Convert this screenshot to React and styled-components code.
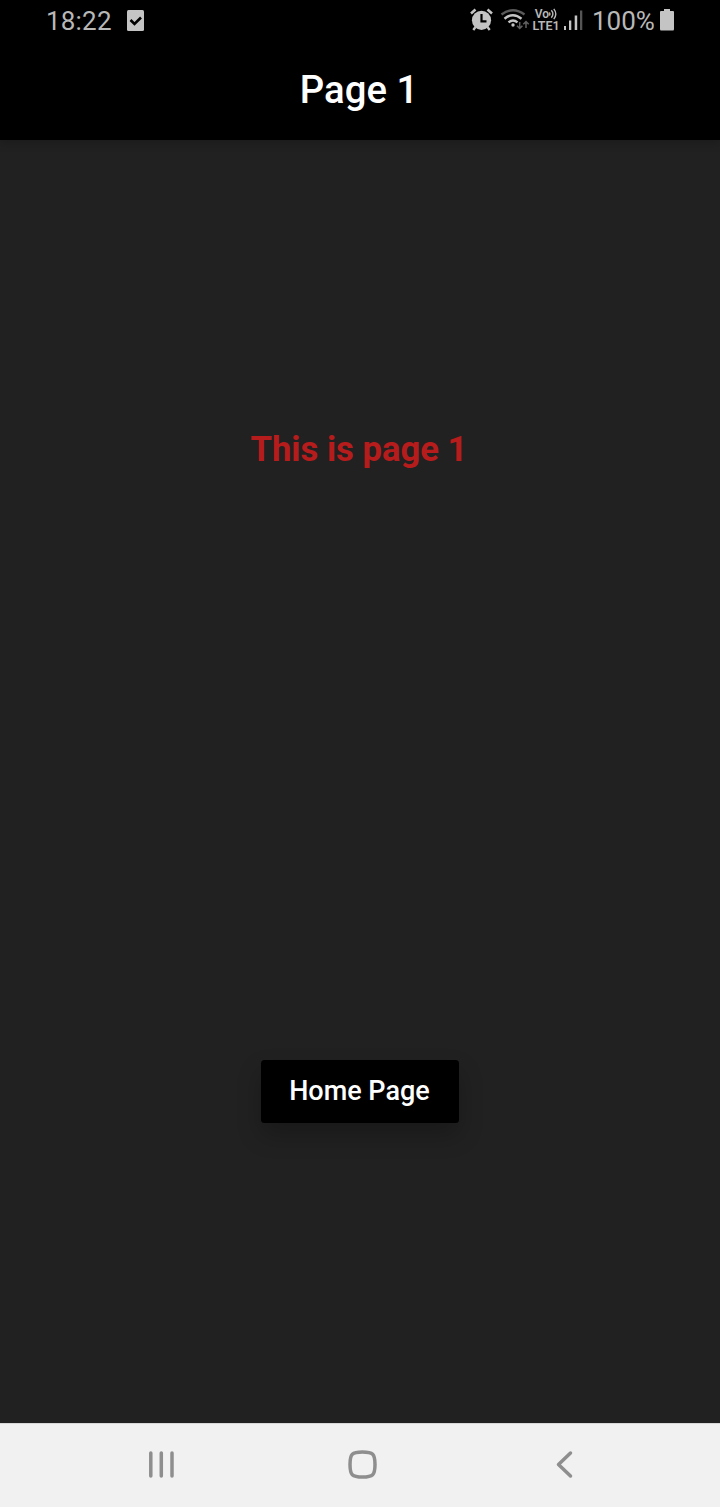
import React from 'react';
import styled, { createGlobalStyle } from 'styled-components';

const GlobalStyle = createGlobalStyle`
  * { box-sizing: border-box; }
  body { margin: 0; background: #212121; }
`;

const Screen = styled.div`
  width: 720px;
  height: 1507px;
  display: flex;
  flex-direction: column;
  background: #212121;
  font-family: Roboto, sans-serif;
  overflow: hidden;
`;

const Header = styled.header`
  height: 140px;
  flex: none;
  background: #000;
  box-shadow: 0 3px 9px rgba(0, 0, 0, 0.2);
`;

const StatusBar = styled.div`
  height: 42px;
  padding: 0 45px 0 46px;
  display: flex;
  justify-content: space-between;
  color: #b8b8b8;
`;

const StatusGroup = styled.div`
  display: flex;
  align-items: flex-start;
`;

const StatusText = styled.span`
  width: ${({ $width }) => $width}px;
  font-size: 26px;
  line-height: 42px;
  letter-spacing: ${({ $spacing }) => $spacing || 0}px;
  white-space: nowrap;
`;

const StatusIcon = styled.svg`
  display: block;
  flex: none;
  height: 42px;
`;

const Network = styled.div`
  width: 29px;
  padding: 8px 0 0 1px;
  display: flex;
  flex-direction: column;
  align-items: center;
  font-size: 12.5px;
  font-weight: 600;
  line-height: 12px;
  white-space: nowrap;
`;

const VoiceLabel = styled.span`
  display: flex;
  align-items: center;
  font-size: 12px;
`;

const VoiceWaves = styled.svg`
  display: block;
  width: 8px;
  height: 12px;
  fill: none;
  stroke: currentColor;
  stroke-width: 1.4;
`;

const AppBar = styled.div`
  height: 98px;
  padding: 0 2px 2px 0;
  display: flex;
  align-items: center;
  justify-content: center;
`;

const Title = styled.h1`
  margin: 0;
  color: #fff;
  font-size: 38.3px;
  font-weight: 500;
  line-height: 46px;
`;

const Content = styled.main`
  flex: 1;
  display: flex;
  flex-direction: column;
  align-items: center;
  padding: 288px 0 300px;
  justify-content: space-between;
`;

const Message = styled.p`
  margin: 0;
  padding-right: 2px;
  color: #b71c1c;
  font-size: 34.65px;
  font-weight: 700;
  line-height: 42px;
`;

const HomeButton = styled.button`
  width: 198px;
  height: 63px;
  padding: 0 1px 2px 0;
  border: 0;
  border-radius: 3.5px;
  background: #000;
  color: #fff;
  font: 500 27px/32px Roboto, sans-serif;
  box-shadow: 0 12px 24px rgba(0, 0, 0, 0.24);
`;

const NavBar = styled.nav`
  height: 84px;
  flex: none;
  display: flex;
  align-items: center;
  justify-content: space-between;
  padding: 0 141px 2px 146px;
  background: #f1f1f1;
  border-top: 1px solid #d8d8d8;
`;

const NavIcon = styled.svg`
  display: block;
  fill: none;
  stroke: #8e8e8e;
  stroke-width: 3.5;
  stroke-linecap: round;
  stroke-linejoin: round;
`;

export default function App() {
  return (
    <>
      <GlobalStyle />
      <Screen>
        <Header>
          <StatusBar>
            <StatusGroup>
              <StatusText $width={78} $spacing={0.2}>18:22</StatusText>
              <StatusIcon width="24" viewBox="124 0 24 42">
                <rect x="127" y="10" width="17" height="21" rx="1.5" fill="#c4c4c4" />
                <path d="M130.5 20l4 4 6.5-6.5" fill="none" stroke="#000" strokeWidth="2.6" />
              </StatusIcon>
            </StatusGroup>
            <StatusGroup>
              <StatusIcon width="63" viewBox="468 0 63 42" fill="none">
                <circle cx="481.5" cy="20.3" r="9.6" fill="#c4c4c4" />
                <path d="M475.5 27l-2.200 3M487.500 27l2.200 3" stroke="#c4c4c4" strokeWidth="2.4" />
                <path d="M471 13.500l4.500-4M492 13.500l-4.500-4" stroke="#c4c4c4" strokeWidth="2.6" />
                <path d="M481.500 14v7.300h5" stroke="#000" strokeWidth="2.2" />
                <path d="M501.500 14.500q11.500-8.500 23 0" stroke="#5a5a5a" strokeWidth="2.4" />
                <path d="M504.500 18.700q8.500-7 17 0M508.500 22.300q4.500-3.800 9 0" stroke="#c4c4c4" strokeWidth="2.4" />
                <circle cx="513" cy="25" r="1.7" fill="#c4c4c4" />
                <path d="M519.700 22v6.500m-2.700-2.700l2.700 2.700l2.700-2.700M526 28v-6.500m-2.700 2.700l2.700-2.700l2.700 2.700" stroke="#606060" strokeWidth="1.5" />
              </StatusIcon>
              <Network>
                <VoiceLabel>
                  Vo
                  <VoiceWaves viewBox="0 0 8 12">
                    <path d="M0.300 4.500q1.200 1.500 0 3M2.300 2.300q3.200 3.700 0 7.400M4.800 0.900q4 5.100 0 10.200" />
                  </VoiceWaves>
                </VoiceLabel>
                <span>LTE1</span>
              </Network>
              <StatusIcon width="32" viewBox="560 0 32 42">
                <path d="M564 26h2v4h-2zM569 20.500h2.300v9.500h-2.300zM574.700 15.500h2.500v14.500h-2.500z" fill="#c4c4c4" />
                <path d="M580 10.500h2.300v19.500h-2.300z" fill="#555" />
              </StatusIcon>
              <StatusText $width={66}>100%</StatusText>
              <StatusIcon width="17" viewBox="658 0 17 42">
                <path d="M660 12q0-1 1-1h3v-2h6v2h3q1 0 1 1v17q0 1.500-1 1.500h-12q-1 0-1-1.500z" fill="#c4c4c4" />
              </StatusIcon>
            </StatusGroup>
          </StatusBar>
          <AppBar>
            <Title>Page 1</Title>
          </AppBar>
        </Header>
        <Content>
          <Message>This is page 1</Message>
          <HomeButton>Home Page</HomeButton>
        </Content>
        <NavBar>
          <NavIcon width="30" height="30" viewBox="146 1450 30 30">
            <path d="M150.800 1453v23M161.300 1453v23M172 1453v23" />
          </NavIcon>
          <NavIcon width="30" height="30" viewBox="347.500 1450 30 30">
            <path d="M362 1452c10.500 0 12.500 2 12.500 12.500s-2 12.500-12.500 12.500s-12.500-2-12.500-12.500s2-12.500 12.500-12.500z" />
          </NavIcon>
          <NavIcon width="30" height="30" viewBox="549 1450 30 30">
            <path d="M570.500 1453l-12 11.500l12 11.500" />
          </NavIcon>
        </NavBar>
      </Screen>
    </>
  );
}
